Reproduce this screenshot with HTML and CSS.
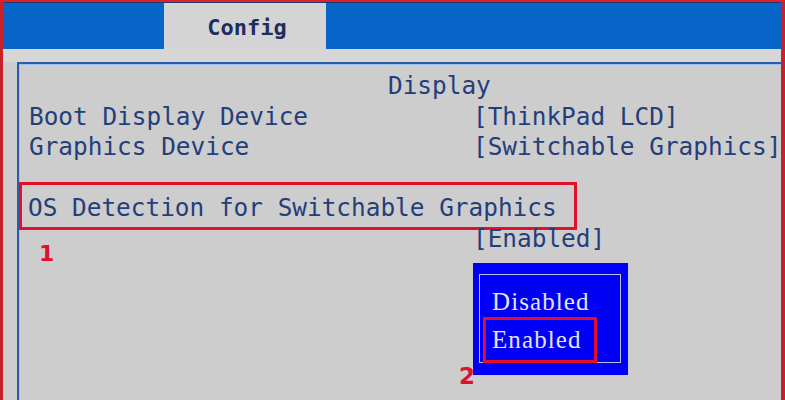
FILE: index.html
```html
<!DOCTYPE html>
<html lang="en">
<head>
    <meta charset="UTF-8">
    <meta name="viewport" content="width=device-width, initial-scale=1.0">
    <title>Config - Display</title>
    <link rel="stylesheet" href="styles.css">
</head>
<body>

  <div class="screen">

    <div class="tabbar">
      <div class="tab">Config</div>
    </div>

    <div class="frame">
      <div class="heading">Display</div>

      <div class="row">
        <span class="label">Boot Display Device</span>
        <span class="value">[ThinkPad LCD]</span>
      </div>

      <div class="row">
        <span class="label">Graphics Device</span>
        <span class="value">[Switchable Graphics]</span>
      </div>

      <div class="row mark-row">
        <span class="label mark">OS Detection for Switchable Graphics</span>
      </div>

      <div class="row">
        <span class="label"><span class="step step-one">1</span></span>
        <span class="value">[Enabled]</span>
      </div>

      <div class="row popup-row">
        <span class="label"></span>
        <div class="popup">
          <div class="popup-inner">
            <div class="option">Disabled</div>
            <div class="option picked">Enabled</div>
          </div>
          <span class="step step-two">2</span>
        </div>
      </div>
    </div>

  </div>

</body>
</html>
```

FILE: styles.css
```css
body {
  margin: 0;
  background: #cdcdcd;
  font-family: "DejaVu Sans Mono", "Liberation Mono", monospace;
}

.screen {
  width: 785px;
  height: 400px;
  box-sizing: border-box;
  border-top: 2px solid #e0202c;
  border-left: 3px solid #c8202c;
  border-right: 4px solid #c8202c;
  background: #cdcdcd;
  overflow: hidden;
  display: flex;
  flex-direction: column;
}

/* blue bar with the active tab */
.tabbar {
  flex: none;
  height: 60px;
  background: #0866c8;
  border-top: 1px solid #1c3c72;
  border-bottom: 13px solid #d6d6d6;
  box-sizing: border-box;
  padding-left: 161px;
  display: flex;
}

.tab {
  width: 162px;
  background: #d4d4d4;
  color: #1e2d5c;
  font-weight: 700;
  font-size: 22px;
  text-align: center;
  line-height: 50px;
  padding-left: 4px;
  box-sizing: border-box;
}

.frame {
  flex: 1;
  margin-left: 14px;
  border-top: 2px solid #2c5ca8;
  border-left: 2px solid #2c5ca8;
  box-shadow: inset 1px 1px 0 #9cc4f0;
  padding-top: 7px;
  color: #243e7c;
  font-size: 24.4px;
  line-height: 30.5px;
  white-space: nowrap;
}

.heading {
  padding-left: 369px;
}

.row {
  display: flex;
  height: 30.5px;
}

.label {
  width: 454px;
  flex: none;
  padding-left: 10px;
  box-sizing: border-box;
}

.mark-row {
  margin-top: 19px;
  margin-bottom: -6px;
  height: auto;
}

.mark {
  width: 558px;
  border: 3px solid #e2102a;
  padding: 8px 0 3.5px 6px;
}

.step {
  font-family: "DejaVu Sans", sans-serif;
  font-weight: 700;
  color: #e2102a;
  font-size: 22px;
  line-height: 22px;
}

.step-one {
  display: inline-block;
  margin-top: 19px;
  margin-left: 10px;
}

/* the option list */
.popup-row {
  margin-top: 9px;
}

.popup {
  position: relative;
  width: 155px;
  height: 112px;
  box-sizing: border-box;
  background: #0000f4;
  padding: 11px 7px 0 6px;
}

.popup-inner {
  height: 89px;
  box-sizing: border-box;
  border: 1px solid #b8c0f0;
  padding: 8px 0 0 12px;
}

.option {
  font-family: "Liberation Serif", "DejaVu Serif", serif;
  color: #e4e4f4;
  font-size: 25px;
  letter-spacing: 1.1px;
  line-height: 38px;
}

.option.picked {
  margin: -4px 0 0 -9px;
  width: 114px;
  height: 46px;
  box-sizing: border-box;
  border: 3px solid #e2102a;
  padding-left: 6px;
  line-height: 40px;
}

.step-two {
  position: absolute;
  left: -14px;
  top: 102px;
  font-size: 23px;
}
```
